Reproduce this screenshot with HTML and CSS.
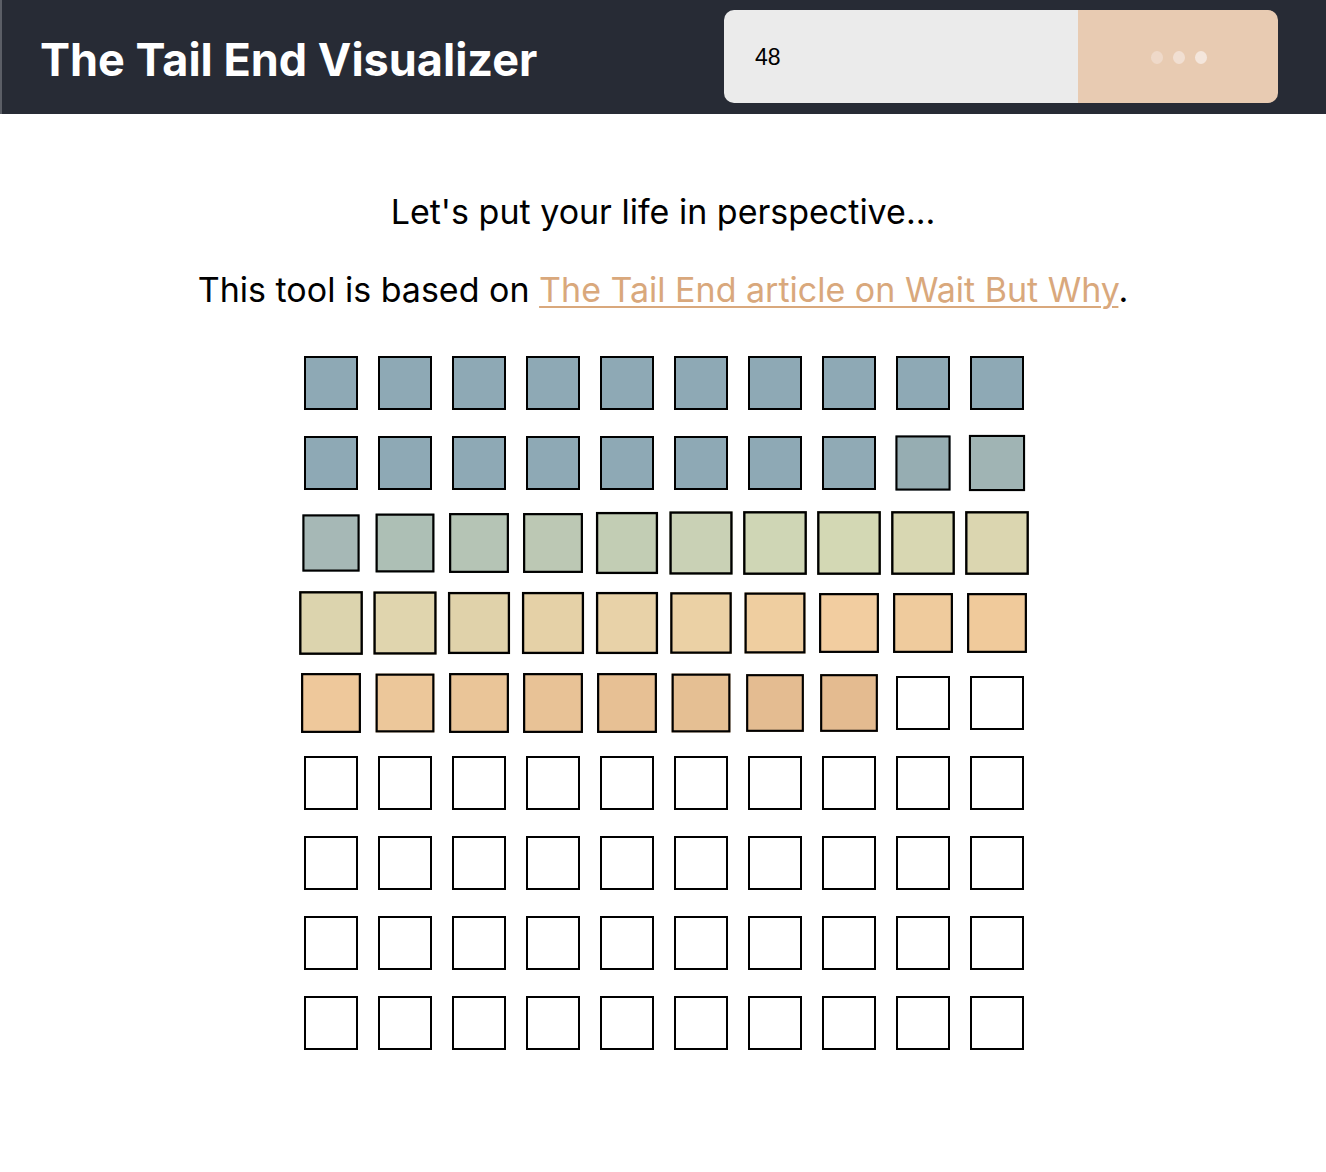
FILE: index.html
```html
<!DOCTYPE html>
<html lang="en">
<head>
<meta charset="utf-8">
<title>The Tail End Visualizer</title>
<link rel="stylesheet" href="styles.css">
</head>
<body>
<header class="topbar">
  <h1 class="title">The Tail End Visualizer</h1>
  <form class="age-form">
    <input class="age-input" type="text" value="48">
    <button class="age-button" type="button" aria-label="loading">
      <span class="dot d1"></span><span class="dot d2"></span><span class="dot d3"></span>
    </button>
  </form>
</header>
<main class="content">
  <p class="lead">Let's put your life in perspective...</p>
  <p class="lead second">This tool is based on <a class="link" href="#">The Tail End article on Wait But Why</a>.</p>
  <div class="grid">
    <div class="sq" style="--c:#8ea9b5;--s:1"></div>
    <div class="sq" style="--c:#8ea9b5;--s:1"></div>
    <div class="sq" style="--c:#8ea9b5;--s:1"></div>
    <div class="sq" style="--c:#8ea9b5;--s:1"></div>
    <div class="sq" style="--c:#8ea9b5;--s:1"></div>
    <div class="sq" style="--c:#8ea9b5;--s:1"></div>
    <div class="sq" style="--c:#8ea9b5;--s:1"></div>
    <div class="sq" style="--c:#8ea9b5;--s:1"></div>
    <div class="sq" style="--c:#8ea9b5;--s:1"></div>
    <div class="sq" style="--c:#8ea9b5;--s:1"></div>

    <div class="sq" style="--c:#8ea9b5;--s:1"></div>
    <div class="sq" style="--c:#8ea9b5;--s:1"></div>
    <div class="sq" style="--c:#8ea9b5;--s:1"></div>
    <div class="sq" style="--c:#8ea9b5;--s:1"></div>
    <div class="sq" style="--c:#8ea9b5;--s:1"></div>
    <div class="sq" style="--c:#8ea9b5;--s:1"></div>
    <div class="sq" style="--c:#8ea9b5;--s:1"></div>
    <div class="sq" style="--c:#90aab5;--s:1"></div>
    <div class="sq" style="--c:#96adb2;--s:1.02"></div>
    <div class="sq" style="--c:#a0b4b4;--s:1.04"></div>

    <div class="sq" style="--c:#a6b8b6;--s:1.06"></div>
    <div class="sq" style="--c:#adbfb5;--s:1.09"></div>
    <div class="sq" style="--c:#b5c4b5;--s:1.11"></div>
    <div class="sq" style="--c:#bcc8b4;--s:1.11"></div>
    <div class="sq" style="--c:#c2cdb4;--s:1.15"></div>
    <div class="sq" style="--c:#c9d1b5;--s:1.17"></div>
    <div class="sq" style="--c:#cfd6b5;--s:1.18"></div>
    <div class="sq" style="--c:#d3d8b4;--s:1.18"></div>
    <div class="sq" style="--c:#d8d7b2;--s:1.18"></div>
    <div class="sq" style="--c:#dbd6b0;--s:1.18"></div>

    <div class="sq" style="--c:#dcd4ae;--s:1.18"></div>
    <div class="sq" style="--c:#e0d5ae;--s:1.17"></div>
    <div class="sq" style="--c:#e0d2aa;--s:1.15"></div>
    <div class="sq" style="--c:#e5d1a7;--s:1.15"></div>
    <div class="sq" style="--c:#e8d2a8;--s:1.15"></div>
    <div class="sq" style="--c:#ebd1a5;--s:1.14"></div>
    <div class="sq" style="--c:#efcea0;--s:1.13"></div>
    <div class="sq" style="--c:#f2cda0;--s:1.11"></div>
    <div class="sq" style="--c:#efcb9d;--s:1.11"></div>
    <div class="sq" style="--c:#f0ca9b;--s:1.11"></div>

    <div class="sq" style="--c:#eec89b;--s:1.11"></div>
    <div class="sq" style="--c:#ecc79a;--s:1.09"></div>
    <div class="sq" style="--c:#eac598;--s:1.11"></div>
    <div class="sq" style="--c:#e8c296;--s:1.11"></div>
    <div class="sq" style="--c:#e7c094;--s:1.11"></div>
    <div class="sq" style="--c:#e5bf93;--s:1.09"></div>
    <div class="sq" style="--c:#e4bc91;--s:1.07"></div>
    <div class="sq" style="--c:#e4bb90;--s:1.07"></div>
    <div class="sq"></div>
    <div class="sq"></div>

    <div class="sq"></div><div class="sq"></div><div class="sq"></div><div class="sq"></div><div class="sq"></div>
    <div class="sq"></div><div class="sq"></div><div class="sq"></div><div class="sq"></div><div class="sq"></div>
    <div class="sq"></div><div class="sq"></div><div class="sq"></div><div class="sq"></div><div class="sq"></div>
    <div class="sq"></div><div class="sq"></div><div class="sq"></div><div class="sq"></div><div class="sq"></div>
    <div class="sq"></div><div class="sq"></div><div class="sq"></div><div class="sq"></div><div class="sq"></div>
    <div class="sq"></div><div class="sq"></div><div class="sq"></div><div class="sq"></div><div class="sq"></div>
    <div class="sq"></div><div class="sq"></div><div class="sq"></div><div class="sq"></div><div class="sq"></div>
    <div class="sq"></div><div class="sq"></div><div class="sq"></div><div class="sq"></div><div class="sq"></div>
  </div>
</main>
</body>
</html>
```

FILE: styles.css
```css
* { box-sizing: border-box; }

html, body {
  margin: 0;
  padding: 0;
  background: #ffffff;
  font-family: Inter, "Noto Sans", "Liberation Sans", sans-serif;
}

.topbar {
  height: 114px;
  background: #272b35;
  border-left: 2px solid #5b5e66;
  display: flex;
  align-items: center;
  justify-content: space-between;
  padding: 0 48px 0 38px;
}

.title {
  margin: 0;
  margin-top: 4px;
  color: #ffffff;
  font-size: 45px;
  font-weight: 700;
  letter-spacing: 0;
}

.age-form {
  display: flex;
  width: 554px;
  height: 93px;
  margin-top: -1px;
  border-radius: 10px;
  overflow: hidden;
}

.age-input {
  width: 354px;
  height: 100%;
  border: none;
  outline: none;
  background: #ebebeb;
  padding: 2px 0 0 31px;
  font-family: "Liberation Sans", Arial, sans-serif;
  font-size: 23px;
  color: #000000;
}

.age-button {
  flex: 1;
  height: 100%;
  border: none;
  background: #e8cbb2;
  display: flex;
  align-items: center;
  justify-content: center;
  gap: 10px;
  padding: 2px 0 0 2px;
}

.dot {
  width: 12px;
  height: 13px;
  border-radius: 50%;
  background: #f4e6dc;
}
.d1 { opacity: 0.55; }
.d2 { opacity: 0.75; }
.d3 { opacity: 1; }

.content {
  display: flex;
  flex-direction: column;
  align-items: center;
  padding-top: 76px;
}

.lead {
  margin: 0;
  font-size: 34px;
  line-height: 44px;
  color: #000000;
  text-align: center;
}

.second {
  margin-top: 34px;
}

.link {
  color: #d9a87c;
  text-decoration: underline;
  text-decoration-thickness: 2px;
  text-underline-offset: 4px;
}

.grid {
  margin: 44px 0 0 2px;
  display: grid;
  grid-template-columns: repeat(10, 54px);
  grid-auto-rows: 54px;
  column-gap: 20px;
  row-gap: 26px;
  padding-bottom: 100px;
}

.sq {
  width: 54px;
  height: 54px;
  border: 2px solid #000000;
  background: var(--c, #ffffff);
  transform: scale(var(--s, 1));
}
```
